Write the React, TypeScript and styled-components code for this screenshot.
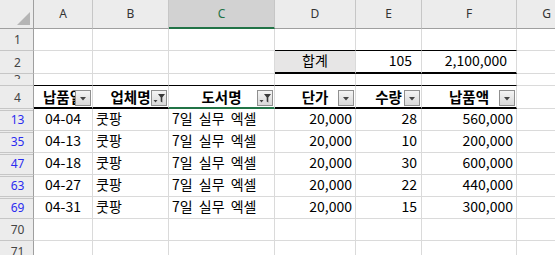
import styled, { createGlobalStyle, css } from 'styled-components';

const GlobalStyle = createGlobalStyle`
  html, body {
    margin: 0;
    padding: 0;
    background: #fff;
    overflow: hidden;
  }
  #root {
    width: 555px;
    height: 255px;
    overflow: hidden;
  }
`;

const GRID = '#dadada';
const HEAD_LINE = '#c6c6c6';
const HEAD_EDGE = '#9f9f9f';
const GREEN = '#217346';

const Sheet = styled.div`
  display: grid;
  grid-template-columns: 34px 59px 76px 106px 81px 66px 95px 60px;
  grid-template-rows: 29px 22px 23px 12px 23px repeat(7, 22px);
  font-family: "Noto Sans CJK KR", "Noto Sans", sans-serif;
  color: #000;
`;

const Corner = styled.div`
  box-sizing: border-box;
  background: #ececec;
  border-right: 1px solid ${HEAD_EDGE};
  border-bottom: 1px solid ${HEAD_EDGE};
  display: flex;
  align-items: flex-end;
  justify-content: flex-end;
  padding: 0 3px 3px 0;
`;

const ColHead = styled.div<{ $selected?: boolean }>`
  box-sizing: border-box;
  display: flex;
  align-items: center;
  justify-content: center;
  font-family: "Noto Sans", "Liberation Sans", sans-serif;
  font-size: 12px;
  line-height: 28px;
  color: #333;
  background: #ececec;
  border-right: 1px solid ${HEAD_LINE};
  border-bottom: 1px solid ${HEAD_EDGE};
  ${(p) =>
    p.$selected &&
    css`
      background: #d2d2d2;
      color: ${GREEN};
      border-bottom: 2px solid ${GREEN};
      line-height: 27px;
    `}
`;

const RowHead = styled.div<{ $filtered?: boolean; $hiddenAbove?: boolean }>`
  box-sizing: border-box;
  display: flex;
  align-items: center;
  justify-content: center;
  padding-left: 2px;
  font-family: "Noto Sans", "Liberation Sans", sans-serif;
  font-size: 12px;
  line-height: 21px;
  color: ${(p) => (p.$filtered ? '#2b2bf0' : '#444')};
  background: #ececec;
  border-right: 1px solid ${HEAD_EDGE};
  border-bottom: 1px solid ${HEAD_LINE};
  overflow: hidden;
  ${(p) =>
    p.$hiddenAbove &&
    css`
      background-image: linear-gradient(
        to bottom,
        transparent 1px,
        ${HEAD_LINE} 1px,
        ${HEAD_LINE} 2px,
        transparent 2px
      );
    `}
`;

const ClippedNumber = styled.span`
  display: block;
  height: 5px;
  overflow: hidden;
  line-height: 12px;
  align-self: flex-start;
`;

type Edge = 'grid' | 'thin' | 'thick' | 'green';

const edge = (e: Edge) => {
  if (e === 'thin') return '1px solid #000';
  if (e === 'thick') return '2px solid #000';
  if (e === 'green') return `2px solid ${GREEN}`;
  return `1px solid ${GRID}`;
};

const Cell = styled.div<{
  $align?: 'left' | 'center' | 'right';
  $bottom?: Edge;
  $bg?: string;
  $padRight?: number;
}>`
  box-sizing: border-box;
  position: relative;
  display: flex;
  align-items: flex-start;
  justify-content: ${(p) =>
    p.$align === 'right' ? 'flex-end' : p.$align === 'center' ? 'center' : 'flex-start'};
  padding: 0 ${(p) => p.$padRight ?? 3}px 0 3px;
  font-size: 14px;
  line-height: 19px;
  white-space: nowrap;
  overflow: hidden;
  background: ${(p) => p.$bg ?? '#fff'};
  border-right: 1px solid ${GRID};
  border-bottom: ${(p) => edge(p.$bottom ?? 'grid')};
`;

const HeaderCell = styled(Cell)`
  font-weight: 700;
  font-size: 14.5px;
  line-height: 20px;
  padding-top: 1px;
`;

const BookTitle = styled.span`
  word-spacing: 3px;
`;

const FilterBox = styled.span`
  position: absolute;
  right: 1px;
  bottom: 1px;
  width: 16px;
  height: 16px;
  box-sizing: border-box;
  border: 1px solid #8f8f8f;
  background: linear-gradient(#f4f4f4, #d9d9d9);
  display: flex;
`;

function FilterButton({ active }: { active?: boolean }) {
  return (
    <FilterBox>
      <svg width="14" height="14" viewBox="0 0 14 14">
        {active ? (
          <>
            <polygon points="1.5,9 5.5,9 3.5,11.5" fill="#444" />
            <path d="M6 3 H13 L10.3 6.5 V11.5 L8.7 10.5 V6.5 Z" fill="#3a3a3a" />
          </>
        ) : (
          <polygon points="4,6 10,6 7,9.5" fill="#444" />
        )}
      </svg>
    </FilterBox>
  );
}

const COLS = ['A', 'B', 'C', 'D', 'E', 'F', 'G'];

const HEADERS: { label: string; active?: boolean }[] = [
  { label: '납품일' },
  { label: '업체명', active: true },
  { label: '도서명', active: true },
  { label: '단가' },
  { label: '수량' },
  { label: '납품액' },
];

const ROWS = [
  { n: 13, date: '04-04', qty: '28', amount: '560,000' },
  { n: 35, date: '04-13', qty: '10', amount: '200,000' },
  { n: 47, date: '04-18', qty: '30', amount: '600,000' },
  { n: 63, date: '04-27', qty: '22', amount: '440,000' },
  { n: 69, date: '04-31', qty: '15', amount: '300,000' },
];

function EmptyCells({ count, bottom }: { count: number; bottom?: Edge }) {
  return (
    <>
      {Array.from({ length: count }, (_, i) => (
        <Cell key={i} $bottom={bottom} />
      ))}
    </>
  );
}

export default function App() {
  return (
    <>
      <GlobalStyle />
      <Sheet>
        {/* column letters */}
        <Corner>
          <svg width="13" height="13" viewBox="0 0 13 13">
            <polygon points="13,0 13,13 0,13" fill="#b5b5b5" />
          </svg>
        </Corner>
        {COLS.map((c) => (
          <ColHead key={c} $selected={c === 'C'}>
            {c}
          </ColHead>
        ))}

        {/* row 1 */}
        <RowHead>1</RowHead>
        <EmptyCells count={3} />
        <EmptyCells count={3} bottom="thin" />
        <Cell />

        {/* row 2: total */}
        <RowHead>2</RowHead>
        <EmptyCells count={3} />
        <Cell $align="center" $bg="#e7e6e6" $bottom="thick">
          합계
        </Cell>
        <Cell $align="right" $padRight={9} $bottom="thick">
          105
        </Cell>
        <Cell $align="right" $padRight={9} $bottom="thick">
          2,100,000
        </Cell>
        <Cell />

        {/* row 3 */}
        <RowHead>
          <ClippedNumber>3</ClippedNumber>
        </RowHead>
        <EmptyCells count={6} bottom="thin" />
        <Cell />

        {/* row 4: table header */}
        <RowHead>4</RowHead>
        {HEADERS.map((h) => (
          <HeaderCell
            key={h.label}
            $align="center"
            $bottom={h.label === '도서명' ? 'green' : 'thick'}
          >
            {h.label}
            <FilterButton active={h.active} />
          </HeaderCell>
        ))}
        <Cell />

        {/* filtered data rows */}
        {ROWS.map((r) => (
          <Row key={r.n} {...r} />
        ))}

        <RowHead>70</RowHead>
        <EmptyCells count={7} />
        <RowHead>71</RowHead>
        <EmptyCells count={7} />
      </Sheet>
    </>
  );
}

function Row({ n, date, qty, amount }: { n: number; date: string; qty: string; amount: string }) {
  return (
    <>
      <RowHead $filtered $hiddenAbove>
        {n}
      </RowHead>
      <Cell $align="center">{date}</Cell>
      <Cell>쿳팡</Cell>
      <Cell>
        <BookTitle>7일 실무 엑셀</BookTitle>
      </Cell>
      <Cell $align="right">20,000</Cell>
      <Cell $align="right" $padRight={4}>
        {qty}
      </Cell>
      <Cell $align="right">{amount}</Cell>
      <Cell />
    </>
  );
}
